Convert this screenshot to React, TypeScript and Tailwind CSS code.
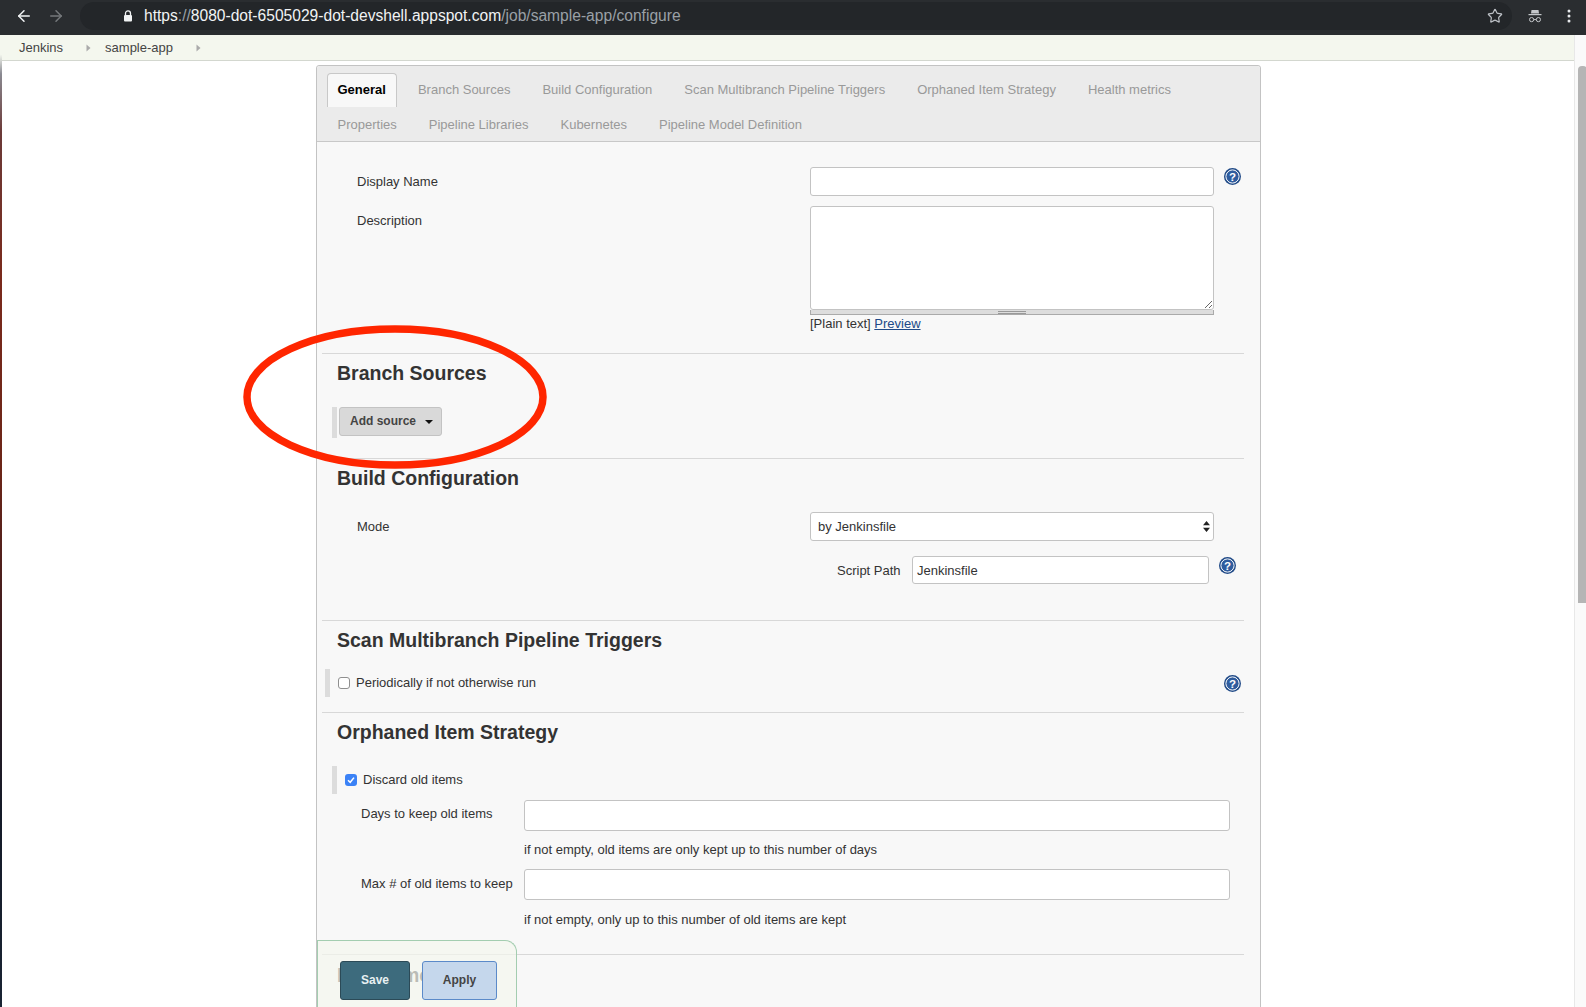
import { ArrowLeft, ArrowRight, RotateCw, Star } from "lucide-react";

const tabsRowOne = ["Branch Sources", "Build Configuration", "Scan Multibranch Pipeline Triggers", "Orphaned Item Strategy", "Health metrics"];
const tabsRowTwo = ["Properties", "Pipeline Libraries", "Kubernetes", "Pipeline Model Definition"];

function HelpIcon() {
  return (
    <svg width="17" height="17" viewBox="0 0 17 17" className="shrink-0">
      <circle cx="8.5" cy="8.5" r="8.5" fill="#204a87" />
      <circle cx="8.5" cy="8.5" r="6.6" fill="#2f5c9e" stroke="#fff" strokeWidth="1" />
      <text x="8.5" y="12.5" textAnchor="middle" fontSize="11.5" fontWeight="700" fill="#fff" fontFamily="Liberation Sans, sans-serif">?</text>
    </svg>
  );
}

function Crumb({ label }: { label: string }) {
  return (
    <div className="flex items-center">
      <span>{label}</span>
      <svg width="5" height="8" viewBox="0 0 5 8" className="ml-[23px] mr-[14px]">
        <path d="M0.5 0.5 L4.5 4 L0.5 7.5 Z" fill="#aaa" />
      </svg>
    </div>
  );
}

function SectionTitle({ children }: { children: string }) {
  return <h2 className="text-[19.5px] leading-[24px] font-bold text-[#333]">{children}</h2>;
}

function TextBox({ className, value }: { className: string; value?: string }) {
  return (
    <input
      readOnly
      defaultValue={value}
      className={`bg-white border border-[#c3c3c3] rounded-[3px] px-[4px] text-[13px] text-[#333] outline-none ${className}`}
    />
  );
}

export default function App() {
  return (
    <div className="flex flex-col w-[1586px] h-[1007px] overflow-hidden bg-white text-[13px] text-[#333] font-['Liberation_Sans',Arial,sans-serif]">
      <header className="flex items-center h-[35px] pb-[3px] shrink-0 bg-[#2a2d30] text-[#e8eaed]">
        <div className="flex items-center gap-[14px] pl-[15px] w-[107px] -mr-[27px] shrink-0">
          <ArrowLeft size={18} strokeWidth={2} color="#f1f3f4" className="shrink-0" />
          <ArrowRight size={18} strokeWidth={2} color="#75787b" className="shrink-0" />
          <RotateCw size={16} strokeWidth={2} color="#f1f3f4" className="shrink-0 ml-[1px]" />
        </div>
        <div className="relative flex items-center h-[28px] w-[1432px] rounded-full bg-[#232629] pl-[44px]">
          <svg width="10" height="12" viewBox="0 0 10 12" className="absolute left-[43px] top-[8px]">
            <path d="M2.5 5V3.4a2.5 2.5 0 0 1 5 0V5" fill="none" stroke="#f1f3f4" strokeWidth="1.3" />
            <rect x="1" y="5" width="8" height="6.5" rx="1" fill="#f1f3f4" />
          </svg>
          <div className="pl-[20px] text-[15.6px] whitespace-nowrap">
            <span className="text-[#f1f3f4]">https</span>
            <span className="text-[#9aa0a6]">://</span>
            <span className="text-[#f1f3f4]">8080-dot-6505029-dot-devshell.appspot.com</span>
            <span className="text-[#9aa0a6]">/job/sample-app/configure</span>
          </div>
          <Star size={16} color="#bdc1c6" strokeWidth={1.8} className="absolute right-[9px] top-[6px]" />
        </div>
        <svg width="14" height="14" viewBox="0 0 14 14" className="ml-[16px]">
          <path d="M3.5 1H10.5L11 4.6H3Z" fill="#c4c7ca" />
          <rect x="0.5" y="5" width="13" height="1.2" fill="#c4c7ca" />
          <circle cx="3.6" cy="10.6" r="2.1" fill="none" stroke="#c4c7ca" strokeWidth="1" />
          <circle cx="10.4" cy="10.6" r="2.1" fill="none" stroke="#c4c7ca" strokeWidth="1" />
          <path d="M5.7 10.6H8.3" stroke="#c4c7ca" strokeWidth="1" />
        </svg>
        <svg width="4" height="14" viewBox="0 0 4 14" className="ml-[25px]">
          <circle cx="2" cy="2" r="1.5" fill="#e8eaed" />
          <circle cx="2" cy="7" r="1.5" fill="#e8eaed" />
          <circle cx="2" cy="12" r="1.5" fill="#e8eaed" />
        </svg>
      </header>

      <div className="flex flex-1 min-h-0">
        <div className="w-[2px] shrink-0 bg-[linear-gradient(180deg,#f4f7ee_0,#f4f7ee_2%,#8a8a92_4%,#6b3a38_10%,#7a2a1c_25%,#6b2518_45%,#3a1c20_62%,#141a28_80%,#1a2433_100%)]" />

        <div className="relative flex-1 min-w-0 flex flex-col">
          <nav className="flex items-center h-[26px] shrink-0 pl-[17px] bg-[#f4f7ee] border-b border-[#d3d7cf] text-[#444]">
            <Crumb label="Jenkins" />
            <Crumb label="sample-app" />
          </nav>

          <div className="pl-[314px] pt-[4px]">
            <div className="w-[945px] h-[960px] bg-[#f8f8f8] border border-[#c3c3c3] rounded-t-[3px]">
              <div className="h-[76px] bg-[#ebebeb] border-b border-[#c8c8c8] pl-[9.5px] pt-[7px] rounded-t-[3px]">
                <div className="flex gap-[10px] h-[34px]">
                  <div className="flex items-center px-[10px] pb-[2px] h-[34px] bg-[#f8f8f8] border border-b-0 border-[#c8c8c8] rounded-t-[4px] font-bold text-black">General</div>
                  {tabsRowOne.map((t) => (
                    <div key={t} className="flex items-center px-[11px] text-[#999]">{t}</div>
                  ))}
                </div>
                <div className="flex gap-[10px] h-[34px] pt-[2px]">
                  {tabsRowTwo.map((t) => (
                    <div key={t} className="flex items-center px-[11px] text-[#999]">{t}</div>
                  ))}
                </div>
              </div>

              <div className="ml-[5px] mr-[16px]">
                <section className="h-[211px] pt-[25px] pl-[35px] flex">
                  <div className="w-[453px] shrink-0">
                    <div className="h-[39px] pt-[7px] leading-[16px]">Display Name</div>
                    <div className="pt-[7px] leading-[16px]">Description</div>
                  </div>
                  <div className="w-[404px] shrink-0">
                    <TextBox className="block w-[404px] h-[29px]" />
                    <textarea readOnly className="block mt-[10px] w-[404px] h-[104px] bg-white border border-[#c3c3c3] rounded-[3px] outline-none resize-y" />
                    <div className="flex items-center justify-center h-[5px] bg-[#ddd] border border-t-0 border-[#aaa]">
                      <div className="w-[28px] h-[3px] border-y border-[#999]" />
                    </div>
                    <div className="mt-[1px] leading-[16px]">
                      [Plain text] <a href="#" className="text-[#204a87] underline">Preview</a>
                    </div>
                  </div>
                  <div className="pl-[10px] pt-[1px]">
                    <HelpIcon />
                  </div>
                </section>

                <section className="h-[105px] border-t border-[#d8d8d8] pt-[7px] pl-[15px]">
                  <SectionTitle>Branch Sources</SectionTitle>
                  <div className="flex mt-[22px] -ml-[5px]">
                    <div className="w-[5px] h-[31px] bg-[#dcdcdc]" />
                    <button className="ml-[2px] flex items-center h-[29px] w-[103px] pl-[10px] pb-[2px] bg-[#d9d9d9] border border-[#c3c3c3] rounded-[3px] text-[12px] font-bold text-[#444]">
                      Add source
                      <svg width="8" height="4" viewBox="0 0 8 4" className="ml-[9px] mt-[3px]">
                        <path d="M0 0H8L4 4Z" fill="#111" />
                      </svg>
                    </button>
                  </div>
                </section>

                <section className="h-[162px] border-t border-[#d8d8d8] pt-[7px] pl-[15px]">
                  <SectionTitle>Build Configuration</SectionTitle>
                  <div className="flex items-center mt-[22px] ml-[20px]">
                    <div className="w-[453px] shrink-0">Mode</div>
                    <div className="relative w-[404px] h-[29px] bg-white border border-[#c3c3c3] rounded-[3px]">
                      <select className="w-full h-full pl-[7px] appearance-none bg-transparent outline-none text-[13px] text-[#333]">
                        <option>by Jenkinsfile</option>
                      </select>
                      <svg width="7" height="11" viewBox="0 0 7 11" className="absolute right-[3px] top-[8px]">
                        <path d="M3.5 0L7 4.2H0Z M3.5 11L0 6.8H7Z" fill="#222" />
                      </svg>
                    </div>
                  </div>
                  <div className="flex items-center mt-[15px] ml-[500px]">
                    <div className="w-[75px] shrink-0 pt-[1px]">Script Path</div>
                    <TextBox className="w-[297px] h-[28px]" value="Jenkinsfile" />
                    <div className="ml-[10px] -mt-[10px]">
                      <HelpIcon />
                    </div>
                  </div>
                </section>

                <section className="h-[92px] border-t border-[#d8d8d8] pt-[7px] pl-[15px]">
                  <SectionTitle>Scan Multibranch Pipeline Triggers</SectionTitle>
                  <div className="flex items-center mt-[17px] -ml-[12px] h-[28px]">
                    <div className="w-[5px] h-[28px] bg-[#dcdcdc]" />
                    <span className="ml-[8px] w-[12px] h-[12px] bg-white border border-[#8f8f8f] rounded-[3px]" />
                    <span className="ml-[6px]">Periodically if not otherwise run</span>
                    <div className="ml-auto mr-[3px]">
                      <HelpIcon />
                    </div>
                  </div>
                </section>

                <section className="h-[242px] border-t border-[#d8d8d8] pt-[7px]">
                  <div className="pl-[15px]">
                    <SectionTitle>Orphaned Item Strategy</SectionTitle>
                  </div>
                  <div className="flex items-center mt-[22px] ml-[10px] h-[28px]">
                    <div className="w-[5px] h-[28px] bg-[#dcdcdc]" />
                    <span className="ml-[8px] flex items-center justify-center w-[12px] h-[12px] bg-[#3b82f6] rounded-[3px]">
                      <svg width="8" height="8" viewBox="0 0 8 8">
                        <path d="M1 4.2L3.2 6.3L7 1.6" fill="none" stroke="#fff" strokeWidth="1.5" />
                      </svg>
                    </span>
                    <span className="ml-[6px]">Discard old items</span>
                  </div>
                  <div className="flex mt-[6px] ml-[39px] h-[31px]">
                    <div className="w-[163px] shrink-0 pt-[6px] leading-[16px]">Days to keep old items</div>
                    <TextBox className="w-[706px] h-[31px]" />
                  </div>
                  <div className="mt-[11px] ml-[202px] leading-[16px]">if not empty, old items are only kept up to this number of days</div>
                  <div className="flex mt-[11px] ml-[39px] h-[31px]">
                    <div className="w-[163px] shrink-0 pt-[7px] leading-[16px]">Max # of old items to keep</div>
                    <TextBox className="w-[706px] h-[31px]" />
                  </div>
                  <div className="mt-[12px] ml-[202px] leading-[16px]">if not empty, only up to this number of old items are kept</div>
                </section>

                <section className="border-t border-[#d8d8d8] pt-[8px] pl-[15px]">
                  <SectionTitle>Health metrics</SectionTitle>
                </section>
              </div>
            </div>
          </div>

          <div className="absolute left-[315px] top-[905px] w-[200px] h-[80px] bg-[#f4f7ee]/70 border-t border-r border-l border-[#a3cdb0] rounded-tr-[12px] flex gap-[12px] pl-[22px] pt-[20px]">
            <button className="w-[70px] h-[39px] pb-[2px] bg-[#3d6b7d] border border-[#2b4a57] rounded-[3px] text-[12px] font-bold text-[#e8f0f2]">Save</button>
            <button className="w-[75px] h-[39px] pb-[2px] bg-[#c5d7ec] border border-[#5b8ac9] rounded-[3px] text-[12px] font-bold text-[#444]">Apply</button>
          </div>

          <svg width="312" height="152" viewBox="0 0 312 152" className="absolute left-[239px] top-[286px]">
            <ellipse cx="154" cy="76" rx="148" ry="68" fill="none" stroke="#ff2600" strokeWidth="7.5" />
          </svg>
        </div>

        <div className="w-[12px] shrink-0 bg-[#fafafa] border-l border-[#e8e8e8] pt-[31px] pl-[3px]">
          <div className="w-[9px] h-[537px] bg-[#b5b5b5] rounded-t-[4px]" />
        </div>
      </div>
    </div>
  );
}
